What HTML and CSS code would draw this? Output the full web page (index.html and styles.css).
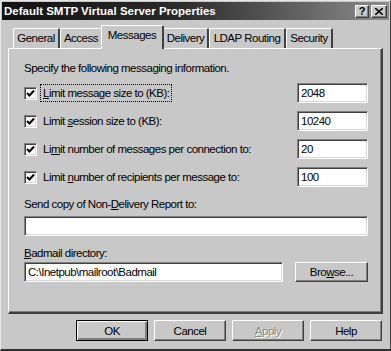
FILE: index.html
```html
<!DOCTYPE html>
<html>
<head>
    <meta charset="UTF-8">
    <title>Default SMTP Virtual Server Properties</title>
    <link rel="stylesheet" href="styles.css">
</head>
<body>
    <div class="window">
        <div class="titlebar">
            <span class="title">Default SMTP Virtual Server Properties</span>
            <span class="title-buttons">
                <span class="cap-btn">?</span>
                <span class="cap-btn close">
                    <svg width="8" height="7" viewBox="0 0 8 7"><path d="M0 0 L8 7 M8 0 L0 7" stroke="#000" stroke-width="1.6"/></svg>
                </span>
            </span>
        </div>

        <div class="tabs">
            <div class="tab t-general">General</div>
            <div class="tab t-access">Access</div>
            <div class="tab t-messages selected">Messages</div>
            <div class="tab t-delivery">Delivery</div>
            <div class="tab t-ldap">LDAP Routing</div>
            <div class="tab t-security">Security</div>
        </div>

        <div class="panel">
            <div class="text">Specify the following messaging information.</div>

            <div class="row">
                <span class="check"><svg width="9" height="9" viewBox="0 0 9 9"><path d="M1 4 L3.5 6.5 L8 1.5" fill="none" stroke="#000" stroke-width="2"/></svg></span>
                <span class="label focus"><u>L</u>imit message size to (KB):</span>
                <div class="field small">2048</div>
            </div>
            <div class="row">
                <span class="check"><svg width="9" height="9" viewBox="0 0 9 9"><path d="M1 4 L3.5 6.5 L8 1.5" fill="none" stroke="#000" stroke-width="2"/></svg></span>
                <span class="label">Limit <u>s</u>ession size to (KB):</span>
                <div class="field small">10240</div>
            </div>
            <div class="row">
                <span class="check"><svg width="9" height="9" viewBox="0 0 9 9"><path d="M1 4 L3.5 6.5 L8 1.5" fill="none" stroke="#000" stroke-width="2"/></svg></span>
                <span class="label">Li<u>m</u>it number of messages per connection to:</span>
                <div class="field small">20</div>
            </div>
            <div class="row">
                <span class="check"><svg width="9" height="9" viewBox="0 0 9 9"><path d="M1 4 L3.5 6.5 L8 1.5" fill="none" stroke="#000" stroke-width="2"/></svg></span>
                <span class="label">Limit <u>n</u>umber of recipients per message to:</span>
                <div class="field small">100</div>
            </div>

            <div class="text caption">Send copy of Non-<u>D</u>elivery Report to:</div>
            <div class="field wide"></div>

            <div class="text caption"><u>B</u>admail directory:</div>
            <div class="dir-row">
                <div class="field path">C:\Inetpub\mailroot\Badmail</div>
                <div class="button browse">Bro<u>w</u>se...</div>
            </div>
        </div>

        <div class="buttons">
            <div class="button default">OK</div>
            <div class="button">Cancel</div>
            <div class="button disabled"><u>A</u>pply</div>
            <div class="button">Help</div>
        </div>
    </div>
</body>
</html>
```

FILE: styles.css
```css
body {
    margin: 0;
    background: #c8c8c8;
    font-family: "Liberation Sans", Arial, sans-serif;
    font-size: 11.5px;
    letter-spacing: -0.5px;
    color: #000;
}

.window {
    width: 391px;
    height: 351px;
    box-sizing: border-box;
    background: #c8c8c8;
    border-top: 1px solid #e6e6e6;
    border-left: 1px solid #e6e6e6;
    border-right: 1px solid #404040;
    border-bottom: 2px solid #303030;
    display: flex;
    flex-direction: column;
}

.titlebar {
    height: 18px;
    margin: 1px 1px 0 1px;
    background: linear-gradient(to right, #111 0%, #2a2a2a 45%, #8c8c8c 100%);
    display: flex;
    align-items: center;
    justify-content: space-between;
    padding: 0 2px 0 2px;
}

.title {
    color: #fff;
    font-weight: bold;
    font-size: 11.5px;
    letter-spacing: 0;
}

.title-buttons {
    display: flex;
    gap: 2px;
}

.cap-btn {
    width: 14px;
    height: 13px;
    box-sizing: border-box;
    background: #c8c8c8;
    border: 1px solid;
    border-color: #fff #404040 #404040 #fff;
    box-shadow: inset -1px -1px #808080;
    font-weight: bold;
    font-size: 11px;
    line-height: 11px;
    letter-spacing: 0;
    display: flex;
    align-items: center;
    justify-content: center;
}

.cap-btn.close {
    width: 16px;
}

.tabs {
    display: flex;
    align-items: flex-end;
    height: 28px;
    padding-left: 12px;
}

.tab {
    height: 20px;
    box-sizing: border-box;
    line-height: 18px;
    text-align: center;
    white-space: nowrap;
    border-top: 1px solid #fff;
    border-left: 1px solid #fff;
    border-right: 2px solid #404040;
    border-radius: 2px 2px 0 0;
}

.t-general { width: 47px; }
.t-access { width: 43px; }
.t-messages { width: 60px; }
.t-delivery { width: 46px; }
.t-ldap { width: 77px; }
.t-security { width: 47px; }

.tab.selected {
    height: 24px;
    line-height: 19px;
    margin: 0 -1px -1px -2px;
    width: 63px;
    background: #c8c8c8;
    position: relative;
    z-index: 1;
}

.panel {
    margin: 0 7px 0 7px;
    height: 266px;
    box-sizing: border-box;
    border-top: 1px solid #fff;
    border-left: 1px solid #fff;
    border-right: 2px solid #404040;
    border-bottom: 2px solid #404040;
    box-shadow: inset -1px -1px #808080;
    padding: 12px 13px 0 15px;
}

.text {
    line-height: 14px;
}

.row {
    display: flex;
    align-items: center;
    height: 20px;
    margin-top: 8px;
}

.check {
    width: 13px;
    height: 13px;
    box-sizing: border-box;
    background: #fff;
    border: 1px solid;
    border-color: #808080 #fff #fff #808080;
    box-shadow: inset 1px 1px #404040, inset -1px -1px #d8d8d8;
    display: flex;
    align-items: center;
    justify-content: center;
    margin-right: 3px;
}

.label {
    line-height: 14px;
    padding: 1px 2px;
    border: 1px dotted transparent;
    flex: 1;
}

.label.focus {
    flex: none;
    border-color: #000;
    margin-right: auto;
}

.field {
    height: 20px;
    box-sizing: border-box;
    background: #fff;
    border: 1px solid;
    border-color: #808080 #fff #fff #808080;
    box-shadow: inset 1px 1px #404040, inset -1px -1px #d8d8d8;
    padding: 2px 3px;
    line-height: 15px;
}

.field.small {
    width: 71px;
}

.caption {
    margin-top: 10px;
    margin-bottom: 5px;
}

.caption + .dir-row {
    margin-top: -3px;
}

.dir-row {
    display: flex;
    justify-content: space-between;
}

.field.path {
    width: 259px;
}

.button {
    width: 72px;
    height: 21px;
    box-sizing: border-box;
    background: #c8c8c8;
    border: 1px solid;
    border-color: #fff #404040 #404040 #fff;
    box-shadow: inset -1px -1px #808080;
    display: flex;
    align-items: center;
    justify-content: center;
}

.button.browse {
    width: 73px;
    height: 20px;
}

.button.default {
    border: 1px solid #000;
    box-shadow: inset 1px 1px #fff, inset -2px -2px #808080;
}

.button.disabled {
    color: #8a8a8a;
    text-shadow: 1px 1px #fff;
}

.buttons {
    display: flex;
    justify-content: flex-end;
    gap: 6px;
    margin-top: 6px;
    padding-right: 8px;
}
```
